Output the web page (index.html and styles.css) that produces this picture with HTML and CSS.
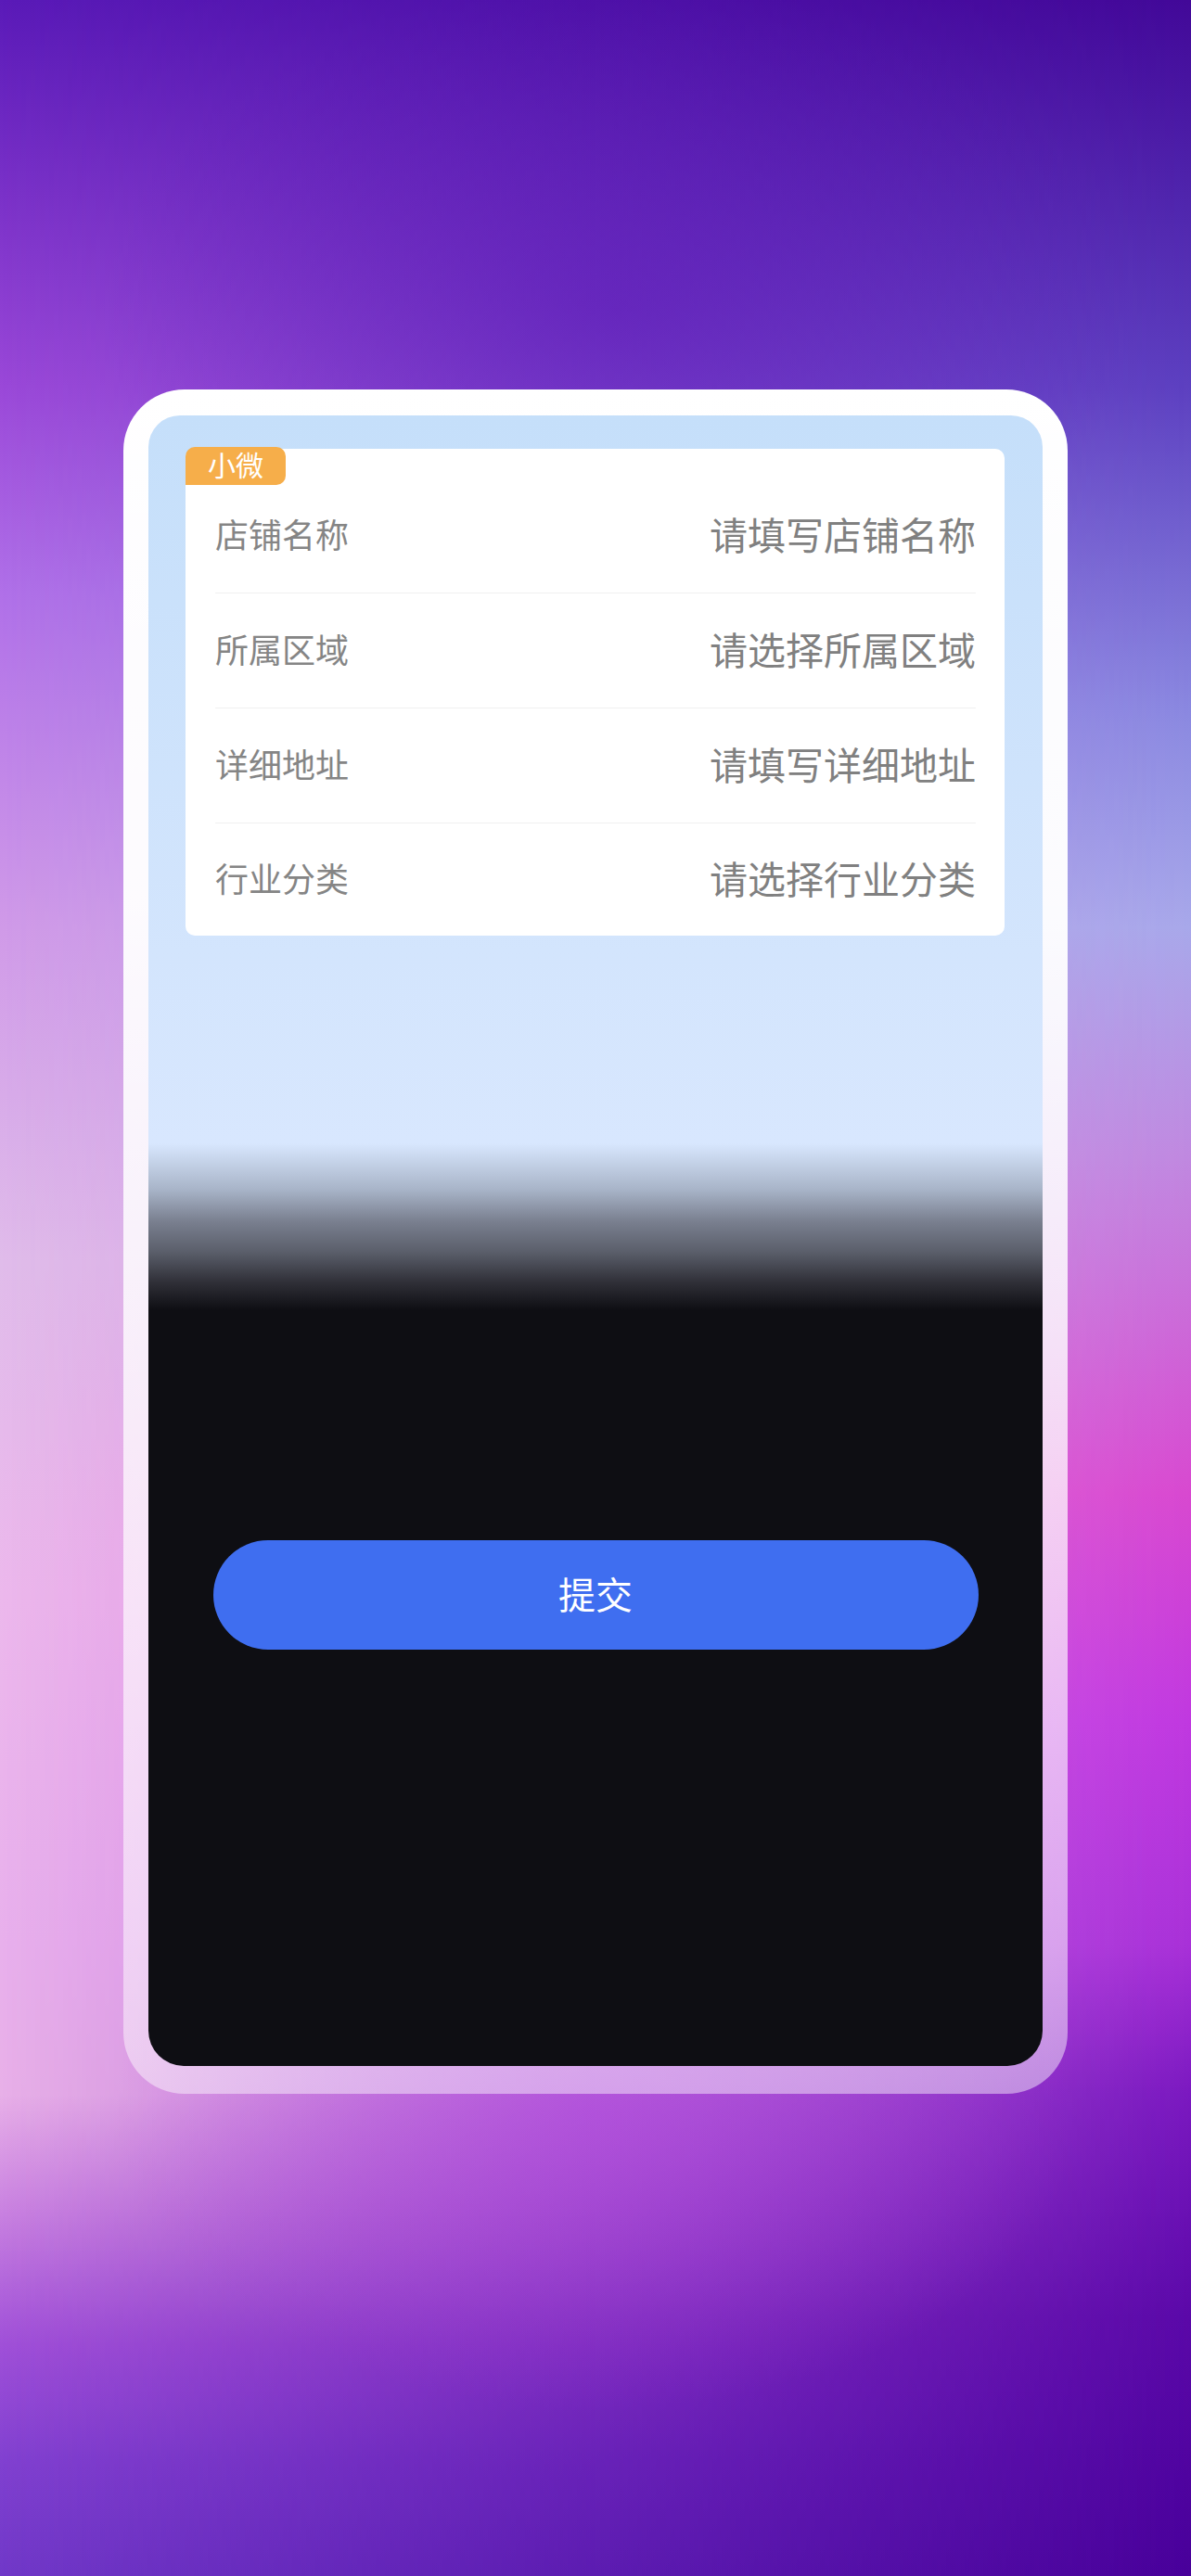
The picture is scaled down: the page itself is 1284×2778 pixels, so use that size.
FILE: index.html
```html
<!DOCTYPE html>
<html lang="zh-CN">
<head>
<meta charset="utf-8">
<title>小微</title>
<link rel="stylesheet" href="styles.css">
</head>
<body>
<div class="page">
  <div class="frame">
    <div class="screen">
      <div class="card">
        <span class="badge">小微</span>
        <div class="row"><span class="label">店铺名称</span><span class="ph">请填写店铺名称</span></div>
        <div class="row"><span class="label">所属区域</span><span class="ph">请选择所属区域</span></div>
        <div class="row"><span class="label">详细地址</span><span class="ph">请填写详细地址</span></div>
        <div class="row last"><span class="label">行业分类</span><span class="ph">请选择行业分类</span></div>
      </div>
      <button class="submit" type="button">提交</button>
    </div>
  </div>
</div>
</body>
</html>
```
FILE: styles.css
```css
html, body {
  margin: 0;
  padding: 0;
}
body {
  width: 1284px;
  min-height: 2778px;
  position: relative;
  font-family: "Noto Sans CJK SC", "Noto Sans", sans-serif;
  background: linear-gradient(180deg,
    #5a1ab8 0%, #9a48d8 15%, #b070e8 23%, #d09ae8 36%, #e0bcea 49%,
    #ecb8ec 62%, #e8b0ec 75.5%, #e8b0e8 81.3%, #c880e0 86%, #a050d8 91%,
    #8040d0 95.7%, #7038c8 100%);
}
body::before {
  content: "";
  position: absolute;
  inset: 0;
  background: linear-gradient(180deg,
    #420898 0%, #5c40c0 15%, #8a88e0 27.5%, #a8a8ea 36%, #c088e0 45%,
    #d848d0 58%, #c038e0 66.8%, #a830d8 75.5%, #7a18c0 81.3%, #5a08a8 90%,
    #48009a 100%);
  -webkit-mask-image: linear-gradient(90deg, transparent 0%, #000 100%);
  mask-image: linear-gradient(90deg, transparent 0%, #000 100%);
}
.page {
  position: relative;
  box-sizing: border-box;
  height: 2778px;
  padding-top: 420px;
  background:
    radial-gradient(ellipse 520px 320px at 50% 82%, rgba(180, 70, 225, 0.55), rgba(180, 70, 225, 0) 100%),
    radial-gradient(ellipse 560px 360px at 52% 12%, rgba(88, 16, 180, 0.45), rgba(88, 16, 180, 0) 100%);
}
.frame {
  box-sizing: border-box;
  width: 1018px;
  height: 1838px;
  margin: 0 auto;
  padding: 28px 27px 30px;
  border-radius: 66px;
  background: linear-gradient(180deg,
    #ffffff 0%, rgba(255,255,255,0.96) 30%, rgba(255,255,255,0.8) 55%,
    rgba(255,255,255,0.6) 80%, rgba(255,255,255,0.45) 100%);
}
.screen {
  box-sizing: border-box;
  height: 100%;
  padding-top: 36px;
  border-radius: 34px 34px 38px 38px;
  overflow: hidden;
  background: linear-gradient(180deg,
    #c5dffa 0%, #d8e7fe 44.1%, #a8b4c8 46.9%, #7a8090 48.8%, #5a5e6a 50.7%,
    #303038 52.5%, #0e0e13 54.2%, #0e0e13 100%);
}
.card {
  position: relative;
  margin: 0 41px 0 40px;
  padding: 32px 31px 0 32px;
  background: #ffffff;
  border-radius: 10px;
}
.badge {
  position: absolute;
  top: -2px;
  left: 0;
  box-sizing: border-box;
  width: 108px;
  height: 41px;
  padding-bottom: 6px;
  display: flex;
  align-items: center;
  justify-content: center;
  background: #f6ae4a;
  color: #ffffff;
  font-size: 30px;
  line-height: 1;
  border-radius: 10px 10px 10px 0;
}
.row {
  box-sizing: border-box;
  display: flex;
  align-items: center;
  justify-content: space-between;
  height: 124px;
  padding-bottom: 6px;
  border-bottom: 1px solid #f0f0f0;
}
.row.last {
  height: 121px;
  border-bottom: 0;
}
.label {
  font-size: 36px;
  color: #858585;
}
.ph {
  font-size: 41px;
  color: #808080;
}
.submit {
  display: block;
  width: 825px;
  height: 118px;
  margin: 652px auto 0;
  border: 0;
  border-radius: 59px;
  background: #3f6ef0;
  color: #ffffff;
  font-family: inherit;
  font-size: 40px;
  padding: 0 0 5px;
}
```
